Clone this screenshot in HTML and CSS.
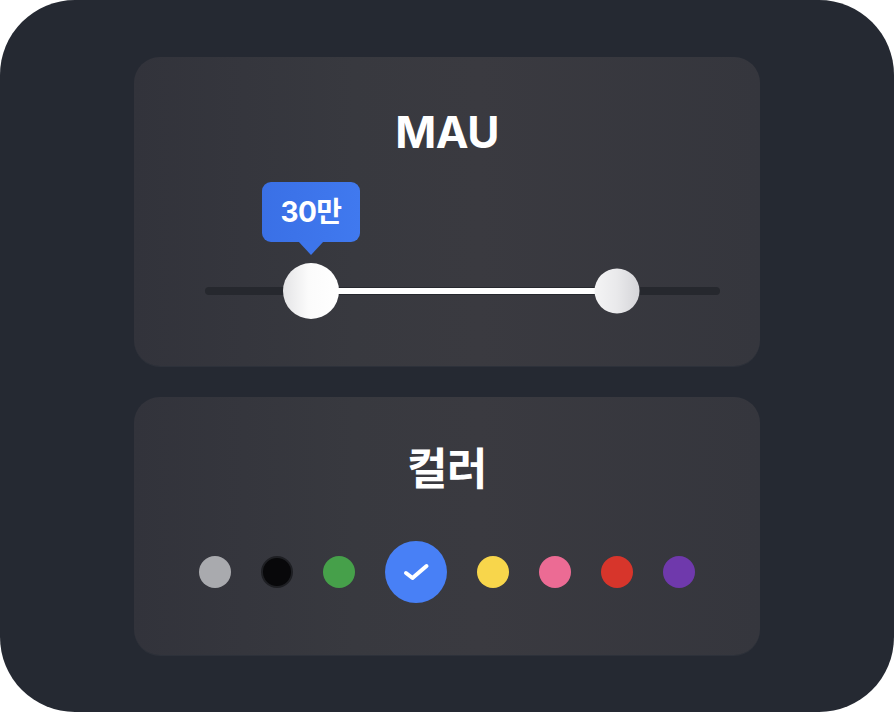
FILE: index.html
```html
<!DOCTYPE html>
<html lang="ko">

<head>
    <meta charset="utf-8">
    <title>필터</title>
    <link rel="stylesheet" href="styles.css">
</head>

<body>
    <main class="panel">

        <!-- MAU range -->
        <section class="card card-mau">
            <h2 class="card-title">MAU</h2>
            <div class="range">
                <div class="range-fill" style="left:106px;width:306px;"></div>
                <div class="tip" style="left:106px;">30만</div>
                <div class="thumb thumb-lg" style="left:106px;"></div>
                <div class="thumb thumb-sm" style="left:412px;"></div>
            </div>
        </section>

        <!-- colour picker -->
        <section class="card card-color">
            <h2 class="card-title">컬러</h2>
            <div class="swatches">
                <span class="swatch grey"></span>
                <span class="swatch black"></span>
                <span class="swatch green"></span>
                <span class="swatch blue selected">
                    <svg viewBox="0 0 32 32" width="32" height="32">
                        <path d="M6 17 L12.5 22 L26.5 10" fill="none" stroke="#fff" stroke-width="4" stroke-linecap="round" stroke-linejoin="round" />
                    </svg>
                </span>
                <span class="swatch yellow"></span>
                <span class="swatch pink"></span>
                <span class="swatch red"></span>
                <span class="swatch purple"></span>
            </div>
        </section>

    </main>
</body>

</html>
```

FILE: styles.css
```css
body {
    margin: 0;
    padding: 0;
    background-color: #fff;
    font-family: Inter, "Noto Sans CJK KR", sans-serif;
}

.panel {
    box-sizing: border-box;
    width: 894px;
    height: 712px;
    padding: 57px 134px;
    border-radius: 75px;
    background-color: #252932;
    display: flex;
    flex-direction: column;
    gap: 31px;
}

.card {
    box-sizing: border-box;
    border-radius: 26px;
    background: linear-gradient(90deg, #32333b 0%, #38393f 35%, #3a3a40 55%, #35363d 100%);
    box-shadow: 0 1px 0 rgba(255, 255, 255, 0.04);
}

.card-mau {
    height: 309px;
    padding-top: 48px;
}

.card-color {
    height: 258px;
    padding-top: 45px;
}

.card-title {
    margin: 0;
    height: 54px;
    line-height: 54px;
    text-align: center;
    color: #fff;
    font-size: 44px;
    font-weight: 700;
    letter-spacing: -0.5px;
}

/* slider */
.range {
    position: relative;
    height: 8px;
    margin: 128px 40px 0 71px;
    border-radius: 4px;
    background-color: #26282e;
}

.range-fill {
    position: absolute;
    top: 1px;
    height: 6px;
    border-radius: 3px;
    background-color: #fff;
}

.thumb {
    position: absolute;
    top: 50%;
    border-radius: 50%;
    transform: translate(-50%, -50%);
}

.thumb-lg {
    width: 56px;
    height: 56px;
    background: linear-gradient(90deg, #e4e4e6 0%, #fbfbfb 45%, #fff 100%);
}

.thumb-sm {
    width: 45px;
    height: 45px;
    background: linear-gradient(90deg, #f4f4f5 0%, #e9e9eb 50%, #d4d4d8 100%);
}

.tip {
    position: absolute;
    bottom: 53px;
    width: 98px;
    height: 60px;
    transform: translateX(-50%);
    border-radius: 9px;
    background: linear-gradient(90deg, #3a70e6, #4079ef);
    color: #fff;
    font-size: 28px;
    font-weight: 700;
    line-height: 60px;
    text-align: center;
    letter-spacing: -0.5px;
}

.tip:after {
    content: "";
    position: absolute;
    left: 50%;
    top: 59px;
    margin-left: -13px;
    border-left: 13px solid transparent;
    border-right: 13px solid transparent;
    border-top: 14px solid #3d75eb;
}

/* colours */
.swatches {
    margin-top: 45px;
    height: 62px;
    display: flex;
    justify-content: center;
    align-items: center;
    gap: 30px;
}

.swatch {
    box-sizing: border-box;
    width: 32px;
    height: 32px;
    border-radius: 50%;
}

.grey { background-color: #a9aaae; }
.black { background-color: #08080a; border: 2px solid #1e1f23; }
.green { background-color: #46a04a; }
.yellow { background-color: #f8d64b; }
.pink { background-color: #ec6b94; }
.red { background-color: #d7352b; }
.purple { background-color: #6f39ac; }

.blue {
    background-color: #4880f6;
}

.selected {
    width: 62px;
    height: 62px;
    display: flex;
    align-items: center;
    justify-content: center;
}
```
